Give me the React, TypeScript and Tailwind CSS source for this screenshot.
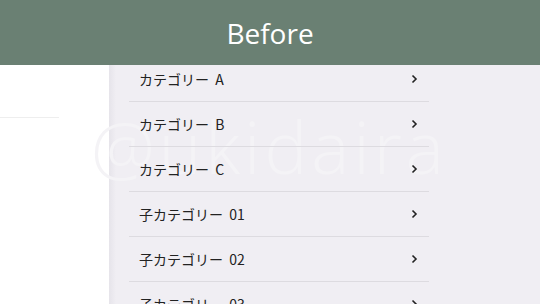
const items = ['カテゴリー A', 'カテゴリー B', 'カテゴリー C', '子カテゴリー 01', '子カテゴリー 02', '子カテゴリー 03'];

function Chevron() {
  return (
    <svg width="8" height="10" viewBox="0 0 8 10" fill="none" className="shrink-0">
      <path d="M2.5 1.5 L6 5 L2.5 8.5" stroke="#222" strokeWidth="1.6" />
    </svg>
  );
}

export default function App() {
  return (
    <div
      className="relative h-[304px] w-[540px] overflow-hidden bg-white"
      style={{ fontFamily: '"Noto Sans CJK JP", "Noto Sans", sans-serif' }}
    >
      {/* ヘッダー */}
      <header className="relative z-20 flex h-[65px] items-center justify-center bg-[#6a8073]">
        <h1 className="text-[28px] text-white" style={{ fontFamily: '"Open Sans", sans-serif' }}>
          Before
        </h1>
      </header>

      <div className="flex h-[239px]">
        {/* 左側 */}
        <div className="w-[109px] shrink-0 pt-[52px]">
          <div className="h-px w-[59px] bg-[#eeeeee]" />
        </div>

        {/* メニュー */}
        <div className="relative flex-1 bg-[#f0eef3]">
          <div className="absolute inset-y-0 left-0 w-[7px] bg-gradient-to-r from-[#e6e4ea] to-[#f0eef3]" />
          <ul className="relative z-10 -mt-2 ml-5 w-[300px]">
            {items.map((item) => (
              <li
                key={item}
                className="flex h-[45px] items-center justify-between border-b border-[#dddbe0] pl-[10px] pr-[11px] text-[14px] text-[#222]"
              >
                <span className="[word-spacing:3px]">{item}</span>
                <Chevron />
              </li>
            ))}
          </ul>
        </div>
      </div>

      {/* ウォーターマーク */}
      <div
        className="pointer-events-none absolute left-[91px] top-[110px] text-[72px] leading-none tracking-[4px] text-[#f4f3f6]"
        style={{ fontFamily: '"Open Sans", sans-serif', fontWeight: 300 }}
      >
        @ukidaira
      </div>
    </div>
  );
}
